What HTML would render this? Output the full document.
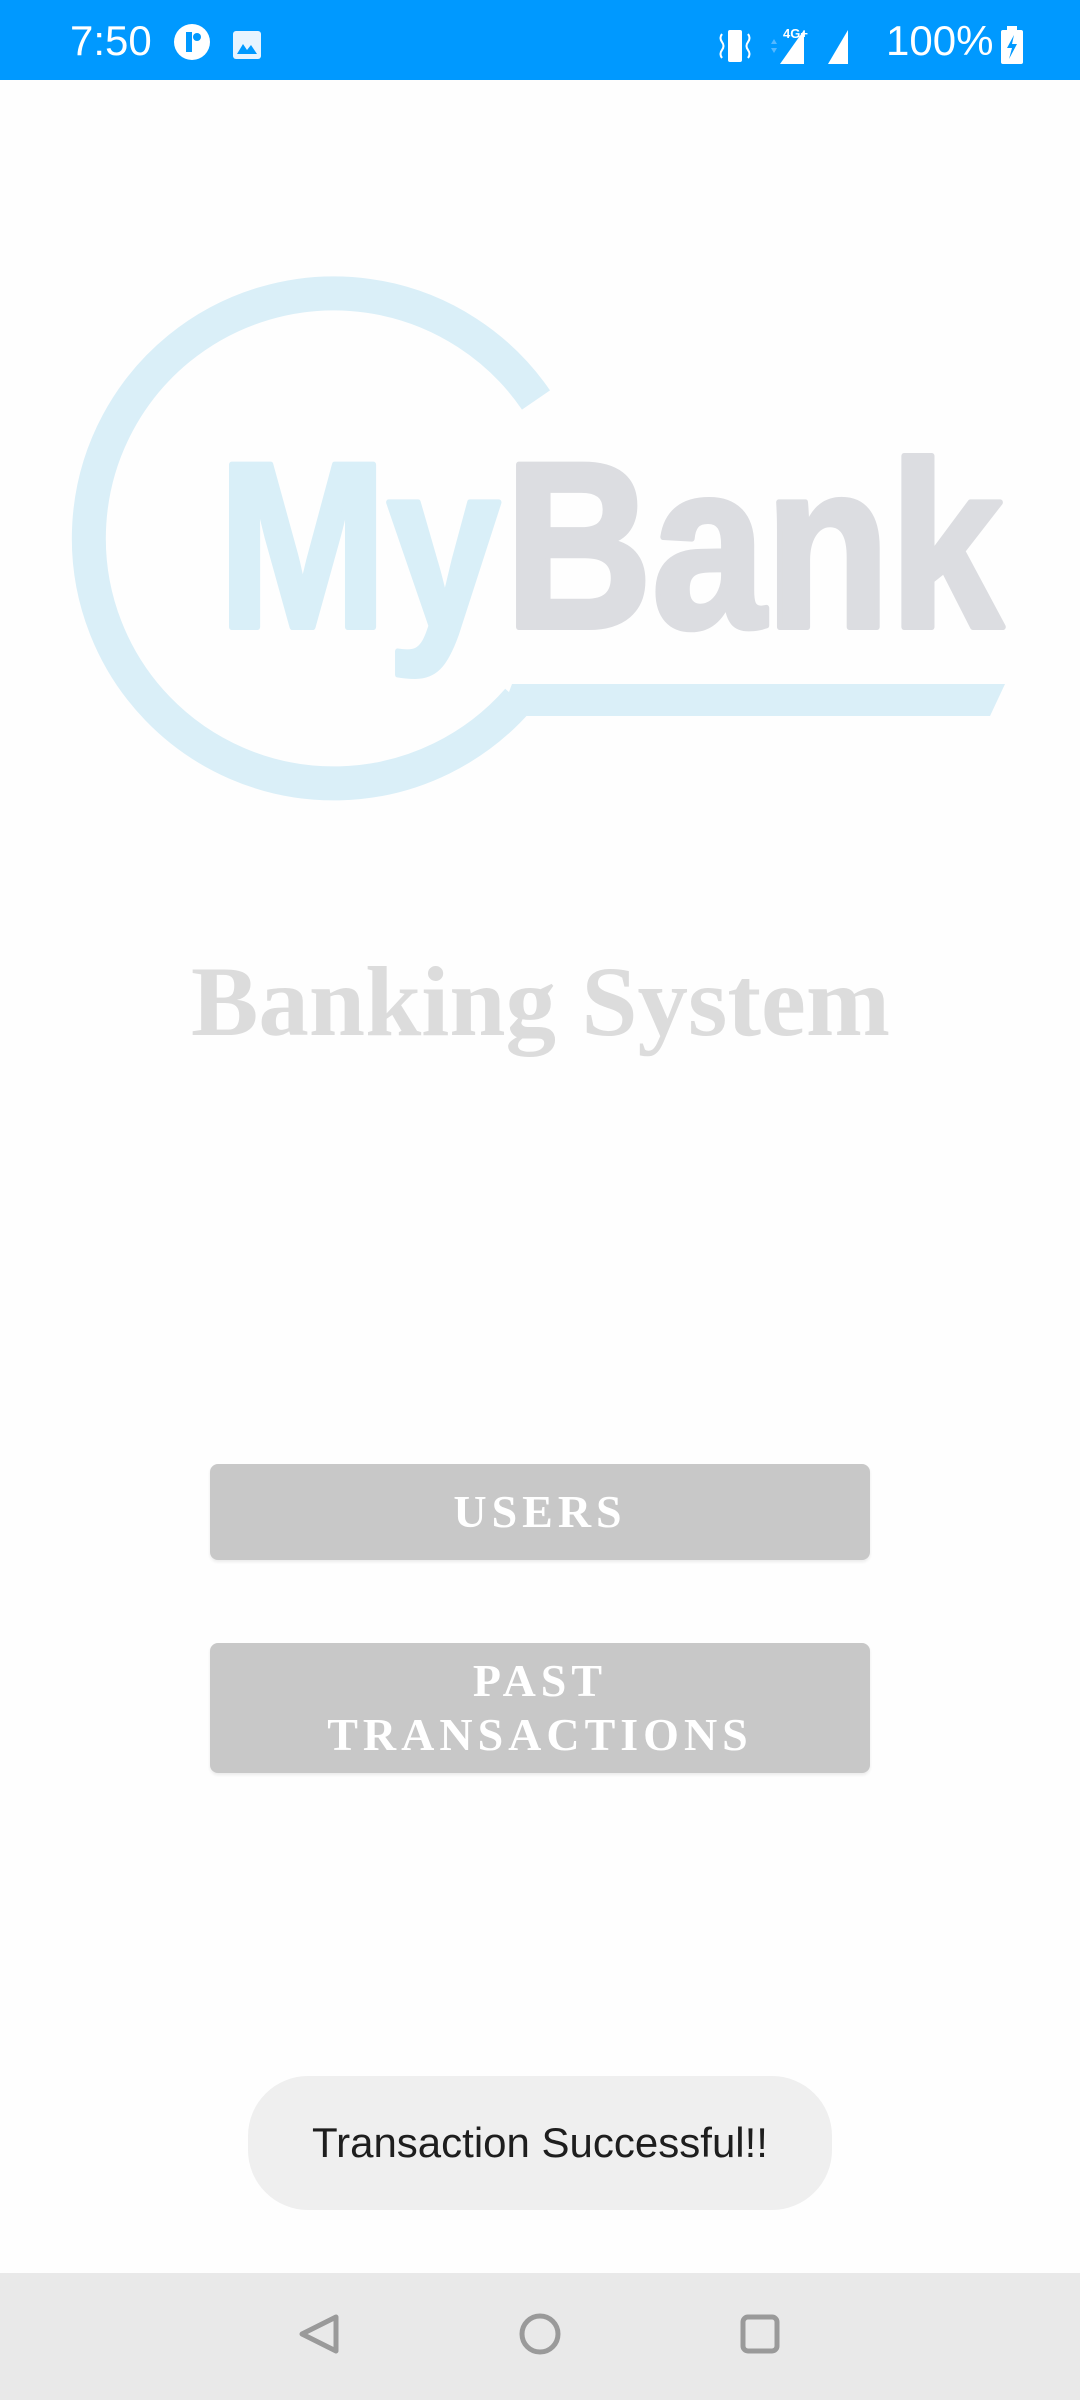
<!DOCTYPE html>
<html><head><meta charset="utf-8"><style>
html,body{margin:0;padding:0;width:1080px;height:2400px;background:#fefefe;overflow:hidden;font-family:"Liberation Sans",sans-serif;position:relative}
.sb{position:absolute;left:0;top:0;width:1080px;height:80px;background:#0099ff;color:#fff}
.btn{position:absolute;left:210px;width:660px;background:#c8c8c8;border-radius:8px;color:#fff;font-family:"Liberation Serif",serif;font-weight:bold;font-size:46px;letter-spacing:5px;text-align:center;box-shadow:0 2px 3px rgba(0,0,0,0.08)}
.toast{position:absolute;left:248px;top:2076px;width:584px;height:134px;background:#efefef;border-radius:60px;font-size:42px;color:#1e1e1e;text-align:center;line-height:134px}
.nav{position:absolute;left:0;top:2273px;width:1080px;height:127px;background:#e9e9e9}
</style></head><body>
<div class="sb">
<div style="position:absolute;left:70px;top:17px;font-size:42px;">7:50</div>
<svg style="position:absolute;left:172px;top:22px" width="40" height="40" viewBox="0 0 40 40"><circle cx="20" cy="20" r="18" fill="#fff"/><rect x="14" y="10" width="6" height="20" fill="#0099ff"/><circle cx="25" cy="15" r="4" fill="#0099ff"/></svg>
<svg style="position:absolute;left:232px;top:30px" width="30" height="30" viewBox="0 0 30 30"><rect x="1" y="1" width="28" height="28" rx="3" fill="#e8f4ff"/><path d="M5 24 L11 14 L15 20 L19 15 L25 24Z" fill="#0099ff"/></svg>
<svg style="position:absolute;left:716px;top:28px" width="40" height="36" viewBox="0 0 40 36"><rect x="12" y="2" width="14" height="32" rx="2" fill="#fff"/><path d="M6 6 q-3 4 0 8 q3 4 0 8 q-3 4 0 8 M32 6 q3 4 0 8 q-3 4 0 8 q3 4 0 8" stroke="#fff" stroke-width="2" fill="none"/></svg>
<div style="position:absolute;left:783px;top:26px;font-size:13px;font-weight:bold">4G+</div>
<svg style="position:absolute;left:764px;top:26px" width="110" height="40" viewBox="0 0 110 40"><path d="M7 18 l3 -5 l3 5z M7 22 l3 5 l3 -5z" fill="#55b8ff"/><path d="M16 38 L40 4 L40 38Z" fill="#fff"/><path d="M64 38 L84 4 L84 38Z" fill="#fff"/></svg>
<div style="position:absolute;left:886px;top:17px;font-size:42px;">100%</div>
<svg style="position:absolute;left:998px;top:26px" width="28" height="40" viewBox="0 0 28 40"><rect x="9" y="0" width="10" height="5" fill="#fff"/><rect x="3" y="4" width="22" height="34" rx="2" fill="#fff"/><path d="M16 9 L9 22 L14 22 L11 33 L19 18 L14 18Z" fill="#0099ff"/></svg>
</div>

<svg style="position:absolute;left:0;top:0" width="1080" height="1100" viewBox="0 0 1080 1100">
<path d="M536 400 A245 245 0 1 0 518 700" fill="none" stroke="#daeff8" stroke-width="34"/>
<path d="M512 684 L1005 684 L990 716 L500 716Z" fill="#daeff8"/>
<text x="218" y="627" font-family="Liberation Sans" font-weight="bold" font-size="236" textLength="282" lengthAdjust="spacingAndGlyphs" fill="#d9eff8" stroke="#d9eff8" stroke-width="6" stroke-linejoin="round">My</text>
<text x="505" y="627" font-family="Liberation Sans" font-weight="bold" font-size="236" textLength="498" lengthAdjust="spacingAndGlyphs" fill="#dcdde1" stroke="#dcdde1" stroke-width="6" stroke-linejoin="round">Bank</text>
<text x="191" y="1035" font-family="Liberation Serif" font-weight="bold" font-size="100" textLength="699" lengthAdjust="spacingAndGlyphs" fill="#dcdcdc">Banking System</text>
</svg>

<div class="btn" style="top:1464px;height:96px;line-height:96px">USERS</div>
<div class="btn" style="top:1643px;height:130px;line-height:54px;padding-top:11px;box-sizing:border-box">PAST<br>TRANSACTIONS</div>

<div class="toast">Transaction Successful!!</div>

<div class="nav">
<svg width="1080" height="127" viewBox="0 0 1080 127">
<path d="M336 44 L302 61 L336 78Z" fill="none" stroke="#9a9a9a" stroke-width="5" stroke-linejoin="round"/>
<circle cx="540" cy="61" r="18" fill="none" stroke="#9a9a9a" stroke-width="5"/>
<rect x="743" y="44" width="34" height="34" rx="5" fill="none" stroke="#9a9a9a" stroke-width="5"/>
</svg>
</div>
</body></html>
